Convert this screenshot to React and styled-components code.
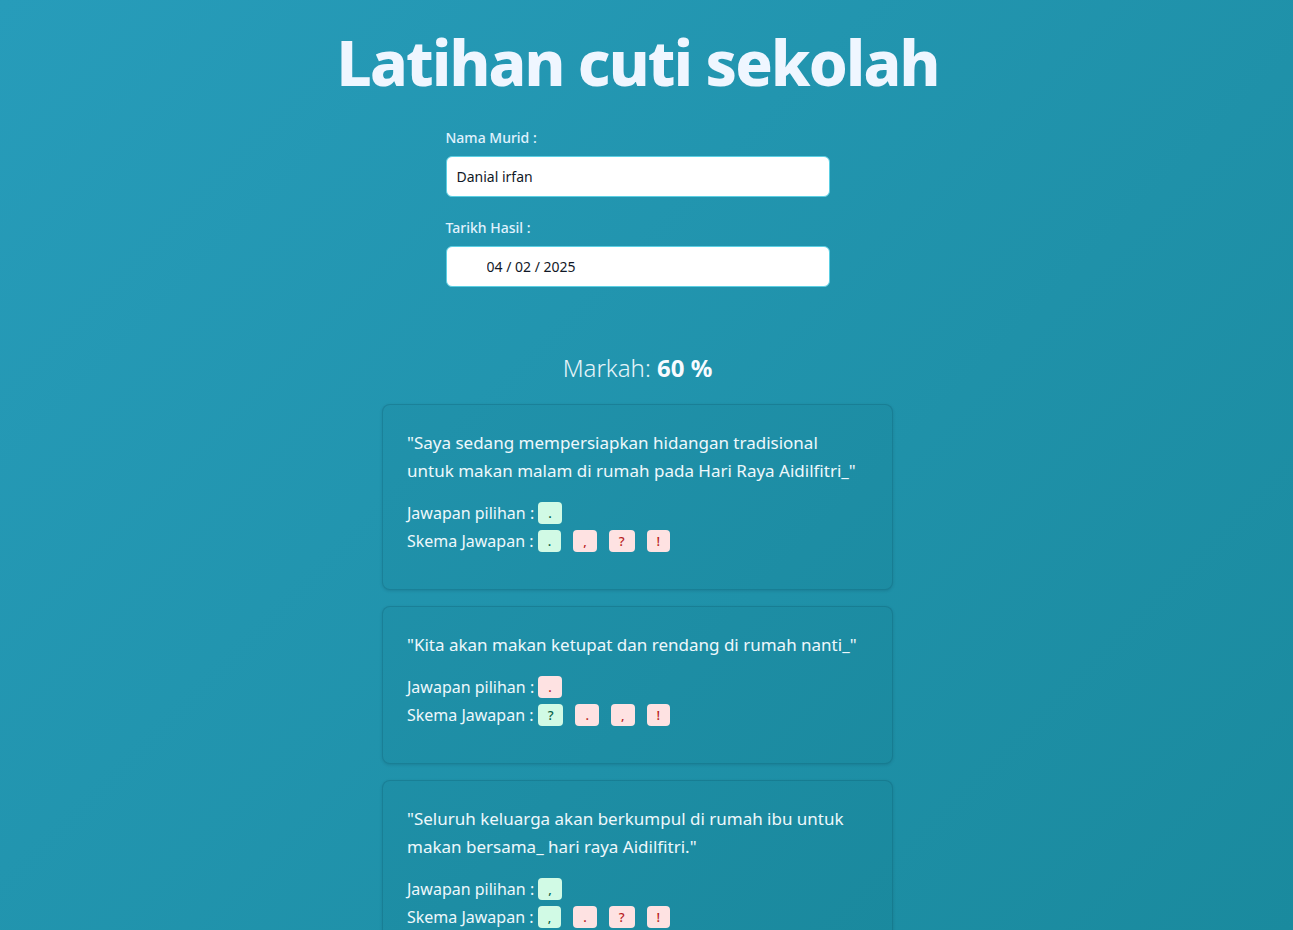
import React from "react";
import styled, { createGlobalStyle } from "styled-components";

const questions = [
  {
    text: '"Saya sedang mempersiapkan hidangan tradisional untuk makan malam di rumah pada Hari Raya Aidilfitri_"',
    picked: ".",
    scheme: [".", ",", "?", "!"],
    answer: ".",
  },
  {
    text: '"Kita akan makan ketupat dan rendang di rumah nanti_"',
    picked: ".",
    scheme: ["?", ".", ",", "!"],
    answer: "?",
  },
  {
    text: '"Seluruh keluarga akan berkumpul di rumah ibu untuk makan bersama_ hari raya Aidilfitri."',
    picked: ",",
    scheme: [",", ".", "?", "!"],
    answer: ",",
  },
];

const App = () => {
  return (
    <>
      <GlobalStyle />
      <Page>
        <Title>Latihan cuti sekolah</Title>
        <Form>
          <Field>
            <Label>Nama Murid :</Label>
            <Input type="text" defaultValue="Danial irfan" readOnly />
          </Field>
          <Field>
            <Label>Tarikh Hasil :</Label>
            <Input type="text" defaultValue="04 / 02 / 2025" readOnly $indent />
          </Field>
        </Form>
        <Score>
          Markah: <strong>60 %</strong>
        </Score>
        <Cards>
          {questions.map((q, i) => (
            <Card key={i}>
              <Question>{q.text}</Question>
              <AnswerRow>
                Jawapan pilihan :{" "}
                <Badge $ok={q.picked === q.answer}>{q.picked}</Badge>
              </AnswerRow>
              <AnswerRow>
                Skema Jawapan :{" "}
                {q.scheme.map((s, j) => (
                  <Badge key={j} $ok={s === q.answer}>
                    {s}
                  </Badge>
                ))}
              </AnswerRow>
            </Card>
          ))}
        </Cards>
      </Page>
    </>
  );
};

const GlobalStyle = createGlobalStyle`
  html, body {
    margin: 0;
    padding: 0;
  }
  body {
    font-family: "Noto Sans", "Open Sans", sans-serif;
    background: linear-gradient(135deg, #279cba 0%, #1a8a9e 100%);
    background-attachment: fixed;
    min-height: 100vh;
  }
`;

const Page = styled.div`
  display: flex;
  flex-direction: column;
  align-items: center;
  padding: 24px 18px 40px 0;
`;

const Title = styled.h1`
  margin: 0;
  font-size: 62px;
  line-height: 77px;
  font-weight: 800;
  letter-spacing: -1.8px;
  color: #eff6ff;
`;

const Form = styled.div`
  width: 384px;
  margin-top: 27px;
  display: flex;
  flex-direction: column;
  gap: 21px;
`;

const Field = styled.div`
  display: flex;
  flex-direction: column;
  gap: 8px;
`;

const Label = styled.label`
  font-size: 14px;
  line-height: 20px;
  font-weight: 500;
  color: #e0f2fe;
`;

const Input = styled.input`
  box-sizing: border-box;
  width: 100%;
  height: 41px;
  padding: 0 10px 0 ${(p) => (p.$indent ? "40px" : "10px")};
  border: 1px solid #5ccfe3;
  border-radius: 6px;
  background: #fff;
  font-family: "Noto Sans", sans-serif;
  font-size: 14px;
  color: #111827;
  outline: none;
`;

const Score = styled.div`
  margin-top: 65px;
  font-size: 24px;
  line-height: 32px;
  font-weight: 300;
  color: #e6f4fa;

  strong {
    font-weight: 700;
    color: #f8fbff;
  }
`;

const Cards = styled.div`
  margin-top: 20px;
  display: flex;
  flex-direction: column;
  gap: 16px;
`;

const Card = styled.div`
  box-sizing: border-box;
  width: 511px;
  padding: 24px 24px 34px;
  border: 1px solid rgba(0, 60, 80, 0.18);
  border-radius: 8px;
  background: rgba(0, 40, 60, 0.04);
  box-shadow: 0 1px 3px rgba(0, 30, 50, 0.15);
  color: #eef8fc;
`;

const Question = styled.p`
  margin: 0 0 14px;
  font-size: 17px;
  line-height: 28px;
`;

const AnswerRow = styled.div`
  height: 28px;
  font-size: 16px;
  line-height: 28px;
`;

const Badge = styled.span`
  display: inline-block;
  vertical-align: top;
  margin: 3px 12px 0 0;
  height: 22px;
  line-height: 22px;
  padding: 0 10px;
  border-radius: 4px;
  font-size: 13px;
  font-weight: 500;
  background: ${(p) => (p.$ok ? "#d1fae5" : "#fee2e2")};
  color: ${(p) => (p.$ok ? "#065f46" : "#b91c1c")};
`;

export default App;
